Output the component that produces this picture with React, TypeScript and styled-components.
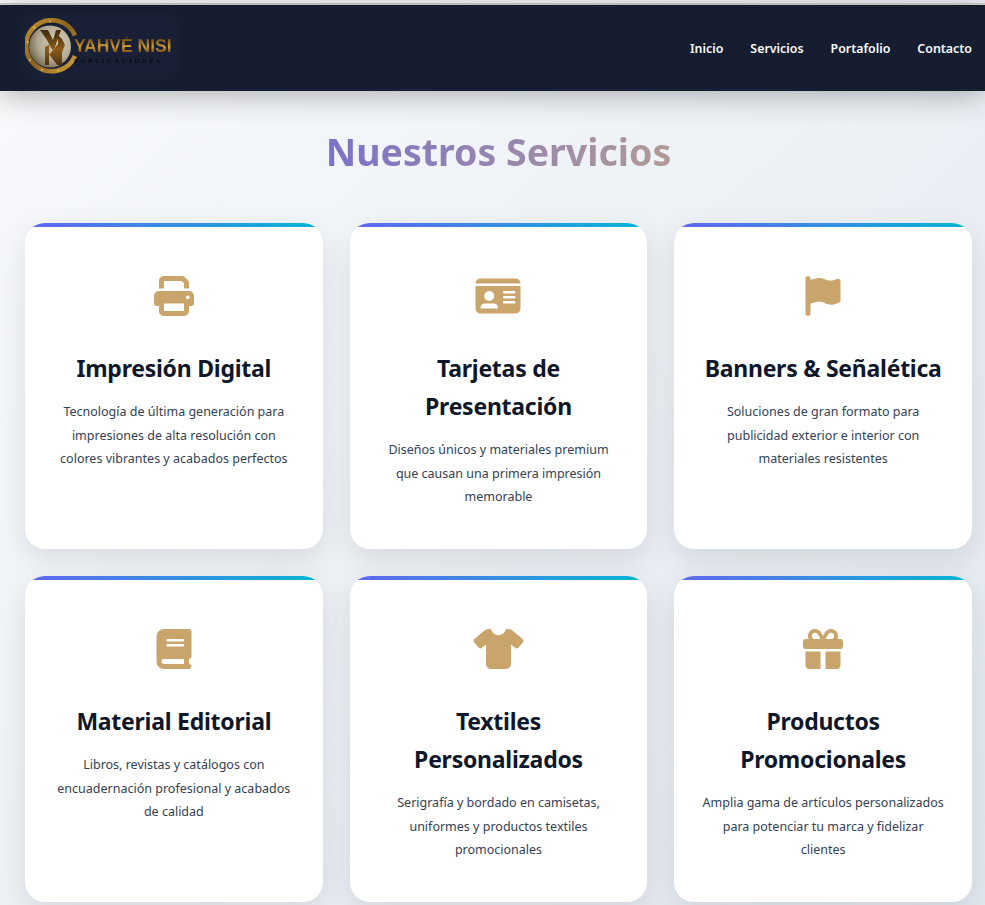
import React from "react"
import styled, { createGlobalStyle } from "styled-components"
import { FaPrint, FaIdCard, FaFlag, FaBook, FaGift } from "react-icons/fa6"

const GlobalStyle = createGlobalStyle`
  html, body {
    margin: 0;
    padding: 0;
    height: 905px;
    overflow: hidden;
  }
  body {
    font-family: "Noto Sans", "Open Sans", sans-serif;
    background: linear-gradient(135deg, #f8fafc 0%, #e2e8f0 100%);
  }
`

const TopLine = styled.div`
  height: 2px;
  margin-top: 3px;
  background: #d4d4d4;
`

const Header = styled.header`
  height: 86px;
  background: #161d30;
  box-shadow: 0 4px 30px rgba(0, 0, 0, 0.3);
  display: flex;
  align-items: center;
  justify-content: space-between;
  padding: 0 13px 0 25px;
  position: relative;
`

const LogoBox = styled.div`
  width: 150px;
  height: 57px;
  margin-bottom: 3px;
  display: flex;
  align-items: center;
  border-radius: 12px;
  background: #192036;
  box-shadow: 0 0 14px rgba(38, 46, 66, 0.6);
`

const LogoText = styled.div`
  display: flex;
  flex-direction: column;
  gap: 2px;
  margin-left: -4px;
  margin-top: 9px;
  white-space: nowrap;
`

const LogoName = styled.div`
  font-family: "Liberation Sans", sans-serif;
  font-weight: 700;
  font-size: 17.5px;
  line-height: 18px;
  background: linear-gradient(#7d5518 15%, #d09a36 55%, #6b4312 90%);
  -webkit-background-clip: text;
  background-clip: text;
  color: transparent;
`

const LogoSub = styled.div`
  font-family: "Liberation Serif", serif;
  font-weight: 700;
  font-size: 7px;
  line-height: 9px;
  letter-spacing: 2.3px;
  color: #07080c;
`

const Nav = styled.nav`
  display: flex;
  gap: 27px;
  margin-top: 2px;
`

const NavLink = styled.a`
  color: #f8fafc;
  font-size: 12.4px;
  font-weight: 600;
  line-height: 18px;
`

const Main = styled.main`
  padding: 35px 13px 0 25px;
`

const Title = styled.h1`
  margin: 0 auto 45px;
  width: fit-content;
  text-align: center;
  font-size: 37.5px;
  line-height: 52px;
  font-weight: 700;
  background: linear-gradient(90deg, #7c72c8, #b09a96);
  -webkit-background-clip: text;
  background-clip: text;
  color: transparent;
`

const Grid = styled.div`
  display: grid;
  grid-template-columns: repeat(3, 1fr);
  gap: 27px;
`

const Card = styled.article`
  height: 326px;
  box-sizing: border-box;
  background: #fff;
  border-radius: 20px;
  box-shadow: 0 10px 30px rgba(0, 0, 0, 0.1);
  padding: 49px 27px 0;
  text-align: center;
  position: relative;
  overflow: hidden;
  &::before {
    content: "";
    position: absolute;
    top: 0;
    left: 0;
    right: 0;
    height: 4px;
    background: linear-gradient(90deg, #6366f1, #06b6d4);
  }
`

const IconWrap = styled.div<{ $width: number }>`
  height: 48px;
  display: flex;
  align-items: center;
  justify-content: center;
  color: #c9a56c;
  margin-bottom: 28.5px;
  svg {
    height: 40px;
    width: ${(p) => p.$width}px;
  }
`

const CardTitle = styled.h3`
  margin: 0 -7px 13.3px;
  font-size: 23px;
  line-height: 38px;
  font-weight: 700;
  letter-spacing: -0.25px;
  color: #0f172a;
`

const CardText = styled.p`
  margin: 0;
  font-size: 12.5px;
  line-height: 23.8px;
  color: #334155;
`

const ShirtIcon = () => (
  <svg viewBox="0 0 640 512" fill="currentColor">
    <path d="M211.8 0c7.8 0 14.3 5.7 16.7 13.2C240.8 51.9 277.1 80 320 80s79.2-28.1 91.5-66.8C413.9 5.7 420.4 0 428.2 0h12.6c22.5 0 44.2 7.9 61.5 22.3L628.5 127.4c6.6 5.5 10.7 13.5 11.4 22.1s-2.1 17.1-7.8 23.6l-56 64c-11.4 13.1-31.2 14.6-44.6 3.5L480 197.7V448c0 35.3-28.7 64-64 64H224c-35.3 0-64-28.7-64-64V197.7l-51.5 42.9c-13.3 11.1-33.1 9.6-44.6-3.5l-56-64c-5.7-6.5-8.5-15-7.8-23.6s4.8-16.6 11.4-22.1L137.7 22.3C155 7.9 176.7 0 199.2 0h12.6z" />
  </svg>
)

const services = [
  {
    icon: <FaPrint />,
    iconWidth: 40,
    title: "Impresión Digital",
    text: "Tecnología de última generación para impresiones de alta resolución con colores vibrantes y acabados perfectos",
  },
  {
    icon: <FaIdCard />,
    iconWidth: 46,
    title: "Tarjetas de Presentación",
    text: "Diseños únicos y materiales premium que causan una primera impresión memorable",
  },
  {
    icon: <FaFlag />,
    iconWidth: 36,
    title: "Banners & Señalética",
    text: "Soluciones de gran formato para publicidad exterior e interior con materiales resistentes",
  },
  {
    icon: <FaBook />,
    iconWidth: 36,
    title: "Material Editorial",
    text: "Libros, revistas y catálogos con encuadernación profesional y acabados de calidad",
  },
  {
    icon: <ShirtIcon />,
    iconWidth: 51,
    title: "Textiles Personalizados",
    text: "Serigrafía y bordado en camisetas, uniformes y productos textiles promocionales",
  },
  {
    icon: <FaGift />,
    iconWidth: 40,
    title: "Productos Promocionales",
    text: "Amplia gama de artículos personalizados para potenciar tu marca y fidelizar clientes",
  },
]

const LogoMark = () => (
  <svg width="53" height="57" viewBox="0 0 53 57" style={{ flex: "none" }}>
    <defs>
      <linearGradient id="ring" x1="0" y1="0" x2="1" y2="1">
        <stop offset="0" stopColor="#c2902f" />
        <stop offset="0.5" stopColor="#8a6220" />
        <stop offset="1" stopColor="#d3a03a" />
      </linearGradient>
      <radialGradient id="disc" cx="0.65" cy="0.4" r="0.75">
        <stop offset="0" stopColor="#d9d2c0" />
        <stop offset="0.6" stopColor="#b0a68e" />
        <stop offset="1" stopColor="#5e543f" />
      </radialGradient>
      <linearGradient id="mono" x1="0" y1="0" x2="0" y2="1">
        <stop offset="0" stopColor="#3d2b10" />
        <stop offset="0.55" stopColor="#8c5c18" />
        <stop offset="1" stopColor="#4e3410" />
      </linearGradient>
    </defs>
    <circle cx="25" cy="28.5" r="21" fill="url(#disc)" />
    <path d="M50 17.5A25.5 25.5 0 1 0 50 38" fill="none" stroke="url(#ring)" strokeWidth="4.5" />
    <g fill="#e8c470">
      <circle cx="25" cy="3.4" r="0.9" />
      <circle cx="9" cy="9.5" r="0.9" />
      <circle cx="2.6" cy="24" r="0.9" />
      <circle cx="5" cy="42" r="0.9" />
      <circle cx="17" cy="52" r="0.9" />
      <circle cx="33" cy="52.5" r="0.9" />
    </g>
    <path
      d="M15 12h8l5 10 3-10h5l-6 17-2 3 -2 -2-4-8zM20 29l4-2v10l9-11V17l4 4 3 6-2 5-1 3v12h-5l-8-11v11h-4z"
      fill="url(#mono)"
    />
  </svg>
)

export default function App() {
  return (
    <>
      <GlobalStyle />
      <TopLine />
      <Header>
        <LogoBox>
          <LogoMark />
          <LogoText>
            <LogoName>YAHVÉ NISI</LogoName>
            <LogoSub>PUBLICACIONES</LogoSub>
          </LogoText>
        </LogoBox>
        <Nav>
          <NavLink>Inicio</NavLink>
          <NavLink>Servicios</NavLink>
          <NavLink>Portafolio</NavLink>
          <NavLink>Contacto</NavLink>
        </Nav>
      </Header>
      <Main>
        <Title>Nuestros Servicios</Title>
        <Grid>
          {services.map((s) => (
            <Card key={s.title}>
              <IconWrap $width={s.iconWidth}>{s.icon}</IconWrap>
              <CardTitle>{s.title}</CardTitle>
              <CardText>{s.text}</CardText>
            </Card>
          ))}
        </Grid>
      </Main>
    </>
  )
}
